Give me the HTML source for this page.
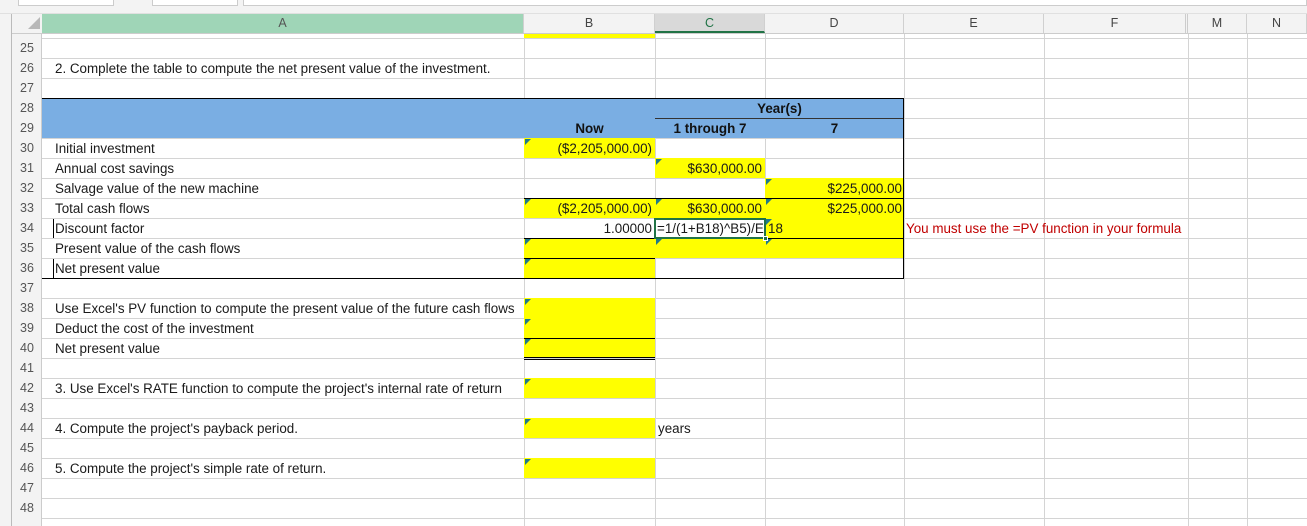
<!DOCTYPE html>
<html><head><meta charset="utf-8"><style>
*{margin:0;padding:0;box-sizing:border-box}
html,body{width:1307px;height:526px;overflow:hidden}
body{background:#fff;font-family:"Liberation Sans",sans-serif;font-size:13.4px;color:#1a1a1a;position:relative}
.a{position:absolute}
.grid{left:42px;top:38px;width:1265px;height:481px;
background-image:repeating-linear-gradient(to bottom,#d4d4d4 0,#d4d4d4 1px,transparent 1px,transparent 20px);}
.v{position:absolute;height:492px;width:1px;background:#d4d4d4}
.y{position:absolute;background:#ffff00}
.t{position:absolute;white-space:nowrap;line-height:21px}
.rn{position:absolute;left:12px;width:30px;text-align:center;color:#555;line-height:21px;font-size:12.5px}
.tri{position:absolute;width:0;height:0;border-top:6px solid #1f7a8c;border-right:6px solid transparent}
.hl{position:absolute;height:1px;background:#000}
.ch{position:absolute;top:14px;height:19px;line-height:19px;text-align:center;color:#444;font-size:12.5px;border-right:1px solid #d0d0d0}
</style></head><body>
<div class="a" style="left:0;top:0;width:1307px;height:14px;background:#f3f3f3;border-bottom:1px solid #e0e0e0"></div>
<div class="a" style="left:18px;top:0;width:96px;height:6px;background:#fff;border:1px solid #ccc;border-top:none"></div>
<div class="a" style="left:152px;top:0;width:86px;height:6px;background:#fff;border:1px solid #ccc;border-top:none"></div>
<div class="a" style="left:243px;top:0;width:1064px;height:6px;background:#fff;border:1px solid #ccc;border-top:none"></div>
<div class="a" style="left:0;top:14px;width:12px;height:512px;background:#f3f3f3;border-right:1px solid #bbb"></div>
<div class="a" style="left:12px;top:14px;width:30px;height:512px;background:#f3f3f3;border-right:1px solid #ccc"></div>
<div class="a" style="left:12px;top:14px;width:1295px;height:20px;background:#f3f3f3;border-bottom:1px solid #ccc"></div>
<div class="a" style="left:28px;top:17px;width:0;height:0;border-left:12px solid transparent;border-bottom:12px solid #b8b8b8"></div>
<div class="ch" style="left:42px;width:482px;background:#9fd5b7;color:#555">A</div>
<div class="ch" style="left:524px;width:131px">B</div>
<div class="ch" style="left:655px;width:110px;background:#d9d9d9;color:#217346;border-bottom:2px solid #217346">C</div>
<div class="ch" style="left:765px;width:139px">D</div>
<div class="ch" style="left:904px;width:140px">E</div>
<div class="ch" style="left:1044px;width:144px;border-right:3px double #ccc">F</div>
<div class="ch" style="left:1188px;width:59px">M</div>
<div class="ch" style="left:1247px;width:60px">N</div>
<div class="a grid"></div>
<div class="v" style="left:524px;top:34px"></div>
<div class="v" style="left:655px;top:34px"></div>
<div class="v" style="left:765px;top:34px"></div>
<div class="v" style="left:904px;top:34px"></div>
<div class="v" style="left:1044px;top:34px"></div>
<div class="v" style="left:1188px;top:34px"></div>
<div class="v" style="left:1247px;top:34px"></div>
<div class="y" style="left:524px;top:34px;width:131px;height:4px"></div>
<div class="a" style="left:42px;top:98px;width:862px;height:40px;background:#7aaee3"></div>
<div class="hl" style="left:42px;top:98px;width:862px"></div>
<div class="hl" style="left:655px;top:118px;width:249px;background:#333"></div>
<div class="t" style="left:655px;top:98px;width:249px;text-align:center;font-weight:bold;color:#111">Year(s)</div>
<div class="t" style="left:524px;top:118px;width:131px;text-align:center;font-weight:bold;color:#111">Now</div>
<div class="t" style="left:655px;top:118px;width:110px;text-align:center;font-weight:bold;color:#111">1 through 7</div>
<div class="t" style="left:765px;top:118px;width:139px;text-align:center;font-weight:bold;color:#111">7</div>
<div class="y" style="left:524px;top:138px;width:131px;height:20px"></div>
<div class="y" style="left:655px;top:158px;width:110px;height:20px"></div>
<div class="y" style="left:765px;top:178px;width:139px;height:20px"></div>
<div class="y" style="left:524px;top:198px;width:380px;height:20px"></div>
<div class="y" style="left:765px;top:218px;width:139px;height:20px"></div>
<div class="y" style="left:524px;top:238px;width:380px;height:20px"></div>
<div class="y" style="left:524px;top:258px;width:131px;height:20px"></div>
<div class="y" style="left:524px;top:298px;width:131px;height:60px"></div>
<div class="y" style="left:524px;top:378px;width:131px;height:20px"></div>
<div class="y" style="left:524px;top:418px;width:131px;height:20px"></div>
<div class="y" style="left:524px;top:458px;width:131px;height:20px"></div>
<div class="hl" style="left:524px;top:198px;width:380px"></div>
<div class="hl" style="left:524px;top:238px;width:380px"></div>
<div class="hl" style="left:524px;top:258px;width:131px"></div>
<div class="hl" style="left:42px;top:278px;width:862px"></div>
<div class="a" style="left:903px;top:98px;width:1px;height:181px;background:#000"></div>
<div class="a" style="left:53px;top:219px;width:1px;height:19px;background:#000"></div>
<div class="a" style="left:53px;top:259px;width:1px;height:19px;background:#000"></div>
<div class="hl" style="left:524px;top:338px;width:131px"></div>
<div class="hl" style="left:524px;top:357px;width:131px"></div>
<div class="hl" style="left:524px;top:359px;width:131px"></div>
<div class="tri" style="left:525px;top:139px"></div>
<div class="tri" style="left:656px;top:159px"></div>
<div class="tri" style="left:766px;top:179px"></div>
<div class="tri" style="left:525px;top:199px"></div>
<div class="tri" style="left:656px;top:199px"></div>
<div class="tri" style="left:766px;top:199px"></div>
<div class="tri" style="left:766px;top:219px"></div>
<div class="tri" style="left:525px;top:239px"></div>
<div class="tri" style="left:656px;top:239px"></div>
<div class="tri" style="left:766px;top:239px"></div>
<div class="tri" style="left:525px;top:259px"></div>
<div class="tri" style="left:525px;top:299px"></div>
<div class="tri" style="left:525px;top:319px"></div>
<div class="tri" style="left:525px;top:339px"></div>
<div class="tri" style="left:525px;top:379px"></div>
<div class="tri" style="left:525px;top:419px"></div>
<div class="tri" style="left:525px;top:459px"></div>
<div class="t" style="left:524px;top:138px;width:128px;text-align:right">($2,205,000.00)</div>
<div class="t" style="left:655px;top:158px;width:107px;text-align:right">$630,000.00</div>
<div class="t" style="left:765px;top:178px;width:137px;text-align:right">$225,000.00</div>
<div class="t" style="left:524px;top:198px;width:128px;text-align:right">($2,205,000.00)</div>
<div class="t" style="left:655px;top:198px;width:107px;text-align:right">$630,000.00</div>
<div class="t" style="left:765px;top:198px;width:137px;text-align:right">$225,000.00</div>
<div class="t" style="left:524px;top:218px;width:128px;text-align:right">1.00000</div>
<div class="a" style="left:654px;top:218px;width:112px;height:21px;border:2px solid #217346;background:#fff"></div>
<div class="a" style="left:763px;top:236px;width:5px;height:5px;background:#217346;border:1px solid #fff"></div>
<div class="t" style="left:657px;top:218px;width:107px;overflow:hidden">=1/(1+B18)^B5)/E</div>
<div class="t" style="left:768px;top:218px">18</div>
<div class="t" style="left:906px;top:218px;color:#c00000">You must use the =PV function in your formula</div>
<div class="t" style="left:658px;top:418px">years</div>
<div class="t" style="left:55px;top:58px">2. Complete the table to compute the net present value of the investment.</div>
<div class="t" style="left:55px;top:138px">Initial investment</div>
<div class="t" style="left:55px;top:158px">Annual cost savings</div>
<div class="t" style="left:55px;top:178px">Salvage value of the new machine</div>
<div class="t" style="left:55px;top:198px">Total cash flows</div>
<div class="t" style="left:55px;top:218px">Discount factor</div>
<div class="t" style="left:55px;top:238px">Present value of the cash flows</div>
<div class="t" style="left:55px;top:258px">Net present value</div>
<div class="t" style="left:55px;top:298px">Use Excel's PV function to compute the present value of the future cash flows</div>
<div class="t" style="left:55px;top:318px">Deduct the cost of the investment</div>
<div class="t" style="left:55px;top:338px">Net present value</div>
<div class="t" style="left:55px;top:378px">3. Use Excel's RATE function to compute the project's internal rate of return</div>
<div class="t" style="left:55px;top:418px">4. Compute the project's payback period.</div>
<div class="t" style="left:55px;top:458px">5. Compute the project's simple rate of return.</div>
<div class="rn" style="top:38px">25</div><div class="rn" style="top:58px">26</div><div class="rn" style="top:78px">27</div>
<div class="rn" style="top:98px">28</div><div class="rn" style="top:118px">29</div><div class="rn" style="top:138px">30</div>
<div class="rn" style="top:158px">31</div><div class="rn" style="top:178px">32</div><div class="rn" style="top:198px">33</div>
<div class="rn" style="top:218px">34</div><div class="rn" style="top:238px">35</div><div class="rn" style="top:258px">36</div>
<div class="rn" style="top:278px">37</div><div class="rn" style="top:298px">38</div><div class="rn" style="top:318px">39</div>
<div class="rn" style="top:338px">40</div><div class="rn" style="top:358px">41</div><div class="rn" style="top:378px">42</div>
<div class="rn" style="top:398px">43</div><div class="rn" style="top:418px">44</div><div class="rn" style="top:438px">45</div>
<div class="rn" style="top:458px">46</div><div class="rn" style="top:478px">47</div><div class="rn" style="top:498px">48</div>
</body></html>
